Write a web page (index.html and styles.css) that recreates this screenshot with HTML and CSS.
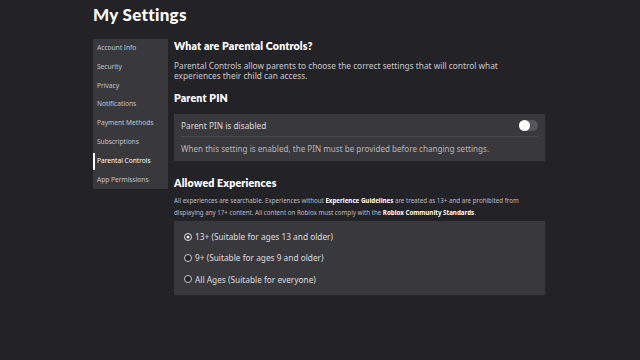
FILE: index.html
```html
<!DOCTYPE html>
<html>
<head>
<meta charset="utf-8">
<link rel="stylesheet" href="styles.css">
</head>
<body>
<div class="page">
  <h1 class="title">My Settings</h1>
  <div class="layout">
    <nav class="sidebar">
      <a class="nav-item">Account Info</a>
      <a class="nav-item">Security</a>
      <a class="nav-item">Privacy</a>
      <a class="nav-item">Notifications</a>
      <a class="nav-item">Payment Methods</a>
      <a class="nav-item">Subscriptions</a>
      <a class="nav-item active">Parental Controls</a>
      <a class="nav-item">App Permissions</a>
    </nav>
    <main class="content">
      <h2 class="heading first">What are Parental Controls?</h2>
      <p class="intro">Parental Controls allow parents to choose the correct settings that will control what experiences their child can access.</p>
      <h2 class="heading">Parent PIN</h2>
      <div class="card pin-card">
        <div class="pin-row">
          <span>Parent PIN is disabled</span>
          <span class="toggle"><span class="knob"></span></span>
        </div>
        <div class="pin-note">When this setting is enabled, the PIN must be provided before changing settings.</div>
      </div>
      <h2 class="heading">Allowed Experiences</h2>
      <p class="small"><span>All experiences are searchable. Experiences without </span><b>Experience Guidelines</b><span> are treated as 13+ and are prohibited from </span><span>displaying any 17+ content. All content on Roblox must comply with the </span><b>Roblox Community Standards</b><span>.</span></p>
      <div class="card radios">
        <label class="radio-row"><span class="radio checked"></span>13+ (Suitable for ages 13 and older)</label>
        <label class="radio-row"><span class="radio"></span>9+ (Suitable for ages 9 and older)</label>
        <label class="radio-row"><span class="radio"></span>All Ages (Suitable for everyone)</label>
      </div>
    </main>
  </div>
</div>
</body>
</html>
```

FILE: styles.css
```css
html, body {
  margin: 0;
  padding: 0;
  background: #232227;
  height: 100%;
}
body {
  font-family: "Noto Sans", "DejaVu Sans", sans-serif;
  color: #e6e6e8;
}
.page {
  padding: 5px 0 0 93px;
  width: 452px;
}
.title {
  margin: 0;
  font-family: "Lato", sans-serif;
  font-weight: 900;
  font-size: 17px;
  line-height: 20px;
  color: #fff;
  letter-spacing: 0.3px;
}
.layout {
  display: flex;
  margin-top: 14px;
  gap: 6px;
}
.sidebar {
  width: 75px;
  flex: none;
  background: #39383d;
  display: flex;
  flex-direction: column;
  padding: 0 0 3px 0;
  height: 150px;
  box-sizing: border-box;
}
.nav-item {
  display: block;
  height: 18.8px;
  line-height: 18.8px;
  font-size: 6.6px;
  color: #c5c5c8;
  padding-left: 4px;
  position: relative;
}
.nav-item.active {
  color: #ffffff;
}
.nav-item.active::before {
  content: "";
  position: absolute;
  left: 0;
  top: 1px;
  bottom: 1px;
  width: 2px;
  background: #fff;
}
.content {
  flex: 1;
  padding-left: 0;
}
.heading {
  margin: 0;
  font-family: "Lato", sans-serif;
  font-weight: 800;
  font-size: 10.6px;
  line-height: 14px;
  color: #fff;
  letter-spacing: 0.15px;
}
.intro {
  margin: 8px 0 10px;
  font-size: 8.3px;
  line-height: 10px;
  color: #c8c8cc;
}
.card {
  background: #39383d;
}
.pin-card {
  margin-top: 9px;
  padding: 0 7px;
  margin-bottom: 15px;
}
.pin-row {
  display: flex;
  justify-content: space-between;
  align-items: center;
  height: 22px;
  font-size: 8.3px;
  color: #dcdcdf;
  border-bottom: 1px solid #4c4b51;
}
.toggle {
  width: 19px;
  height: 11px;
  border-radius: 6px;
  background: #56555b;
  position: relative;
}
.knob {
  position: absolute;
  left: 0;
  top: 0;
  width: 11px;
  height: 11px;
  border-radius: 50%;
  background: #fff;
}
.pin-note {
  height: 24px;
  line-height: 24px;
  font-size: 8.1px;
  color: #b5b5b9;
}
.small {
  margin: 5px 0 2px;
  font-size: 6.2px;
  line-height: 12px;
  color: #bdbdc1;
}
.small b {
  color: #fff;
}
.radios {
  padding: 5px 10px 5px;
  display: flex;
  flex-direction: column;
}
.radio-row {
  display: flex;
  align-items: center;
  height: 21.3px;
  font-size: 8.3px;
  color: #dcdcdf;
}
.radio {
  width: 6px;
  height: 6px;
  border-radius: 50%;
  border: 1px solid #c8c8cc;
  background: #232227;
  margin-right: 3px;
  box-sizing: content-box;
}
.radio.checked {
  background: #fff;
  box-shadow: inset 0 0 0 1.5px #232227;
}
```
